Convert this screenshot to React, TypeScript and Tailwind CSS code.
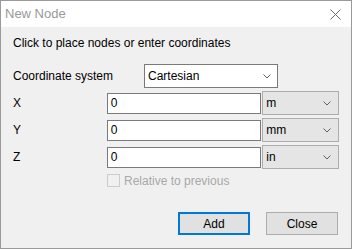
import React from 'react'

function Chevron() {
    return (
        <svg width="8" height="5" viewBox="0 0 8 5" className="shrink-0">
            <path d="M0.5 0.5 L4 4 L7.5 0.5" fill="none" stroke="#606060" strokeWidth="1" />
        </svg>
    )
}

function UnitSelect({ value }: { value: string }) {
    return (
        <div className="ml-[1px] w-[77px] h-[24px] bg-[#e5e5e5] border border-[#adadad] flex items-center justify-between pl-[3px] pr-[7px]">
            <span>{value}</span>
            <Chevron />
        </div>
    )
}

function CoordRow({ label, unit }: { label: string; unit: string }) {
    return (
        <div className="flex items-center h-[24px] mt-[3px]">
            <div className="w-[94px]">{label}</div>
            <div className="w-[155px] h-[21px] bg-white border border-[#7a7a7a] flex items-center pl-[3px]">0</div>
            <UnitSelect value={unit} />
        </div>
    )
}

export default function App() {
    return (
        <div
            className="w-[352px] h-[249px] border border-[#9a9a9a] bg-[#f0f0f0] flex flex-col text-[12px] text-black"
            style={{ fontFamily: '"Liberation Sans", Arial, sans-serif' }}
        >
            <div className="h-[26px] bg-white flex items-center justify-between pl-[4px] pr-[10px] shrink-0">
                <span className="text-[13px] text-[#999999]">New Node</span>
                <svg width="11" height="11" viewBox="0 0 11 11">
                    <path d="M0.5 0.5 L10.5 10.5 M10.5 0.5 L0.5 10.5" stroke="#6b6b6b" strokeWidth="1" />
                </svg>
            </div>

            <div className="flex flex-col pl-[12px] pr-[12px]">
                <div className="mt-[8px] h-[16px] leading-[16px]">Click to place nodes or enter coordinates</div>

                <div className="flex items-center h-[24px] mt-[13px]">
                    <div className="w-[131px]">Coordinate system</div>
                    <div className="w-[134px] h-[24px] bg-white border border-[#7a7a7a] flex items-center justify-between pl-[3px] pr-[6px]">
                        <span>Cartesian</span>
                        <Chevron />
                    </div>
                </div>

                <CoordRow label="X" unit="m" />
                <CoordRow label="Y" unit="mm" />
                <CoordRow label="Z" unit="in" />

                <div className="flex items-center mt-[5px] pl-[94px] h-[13px] text-[#a8a8a8]">
                    <div className="w-[13px] h-[13px] border border-[#cccccc] bg-[#f0f0f0]" />
                    <span className="ml-[4px]">Relative to previous</span>
                </div>

                <div className="flex justify-end mt-[25px] pr-[1px]">
                    <button className="w-[72px] h-[23px] bg-[#e1e1e1] border-2 border-[#0078d7]">Add</button>
                    <button className="ml-[16px] w-[72px] h-[23px] bg-[#e1e1e1] border border-[#adadad]">Close</button>
                </div>
            </div>
        </div>
    )
}
